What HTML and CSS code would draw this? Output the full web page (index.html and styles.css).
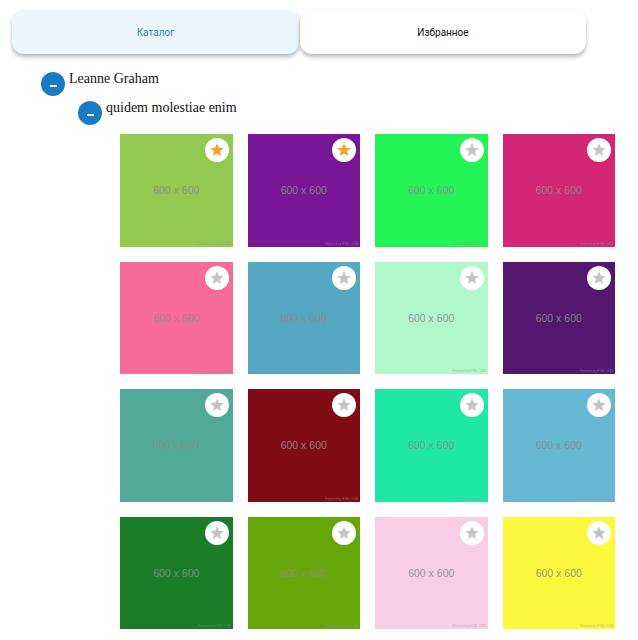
FILE: index.html
```html
<!DOCTYPE html>
<html lang="ru">
<head>
<meta charset="utf-8">
<title>Каталог</title>
<link rel="stylesheet" href="styles.css">
</head>
<body>
<div class="tabs">
  <div class="tab tab-active">Каталог</div>
  <div class="tab">Избранное</div>
</div>
<div class="node node-user">
  <div class="node-row">
    <span class="toggle"><span class="bar"></span></span>
    <span class="node-label">Leanne Graham</span>
  </div>
  <div class="node node-album">
    <div class="node-row">
      <span class="toggle"><span class="bar"></span></span>
      <span class="node-label">quidem molestiae enim</span>
    </div>
    <div class="grid">
      <div class="cell"><div class="photo" style="background:#92c952"><span class="ph">600 x 600</span><span class="pw">Powered by HTML.COM</span><span class="fav on"><svg viewBox="0 0 24 24"><path d="M12 17.27L18.18 21l-1.64-7.03L22 9.24l-7.19-.61L12 2 9.19 8.63 2 9.24l5.46 4.73L5.82 21z"/></svg></span></div></div>
      <div class="cell"><div class="photo" style="background:#771796"><span class="ph">600 x 600</span><span class="pw">Powered by HTML.COM</span><span class="fav on"><svg viewBox="0 0 24 24"><path d="M12 17.27L18.18 21l-1.64-7.03L22 9.24l-7.19-.61L12 2 9.19 8.63 2 9.24l5.46 4.73L5.82 21z"/></svg></span></div></div>
      <div class="cell"><div class="photo" style="background:#24f355"><span class="ph">600 x 600</span><span class="pw">Powered by HTML.COM</span><span class="fav"><svg viewBox="0 0 24 24"><path d="M12 17.27L18.18 21l-1.64-7.03L22 9.24l-7.19-.61L12 2 9.19 8.63 2 9.24l5.46 4.73L5.82 21z"/></svg></span></div></div>
      <div class="cell"><div class="photo" style="background:#d32776"><span class="ph">600 x 600</span><span class="pw">Powered by HTML.COM</span><span class="fav"><svg viewBox="0 0 24 24"><path d="M12 17.27L18.18 21l-1.64-7.03L22 9.24l-7.19-.61L12 2 9.19 8.63 2 9.24l5.46 4.73L5.82 21z"/></svg></span></div></div>
      <div class="cell"><div class="photo" style="background:#f66b97"><span class="ph">600 x 600</span><span class="pw">Powered by HTML.COM</span><span class="fav"><svg viewBox="0 0 24 24"><path d="M12 17.27L18.18 21l-1.64-7.03L22 9.24l-7.19-.61L12 2 9.19 8.63 2 9.24l5.46 4.73L5.82 21z"/></svg></span></div></div>
      <div class="cell"><div class="photo" style="background:#56a8c2"><span class="ph">600 x 600</span><span class="pw">Powered by HTML.COM</span><span class="fav"><svg viewBox="0 0 24 24"><path d="M12 17.27L18.18 21l-1.64-7.03L22 9.24l-7.19-.61L12 2 9.19 8.63 2 9.24l5.46 4.73L5.82 21z"/></svg></span></div></div>
      <div class="cell"><div class="photo" style="background:#b0f7cc"><span class="ph">600 x 600</span><span class="pw">Powered by HTML.COM</span><span class="fav"><svg viewBox="0 0 24 24"><path d="M12 17.27L18.18 21l-1.64-7.03L22 9.24l-7.19-.61L12 2 9.19 8.63 2 9.24l5.46 4.73L5.82 21z"/></svg></span></div></div>
      <div class="cell"><div class="photo" style="background:#54176f"><span class="ph">600 x 600</span><span class="pw">Powered by HTML.COM</span><span class="fav"><svg viewBox="0 0 24 24"><path d="M12 17.27L18.18 21l-1.64-7.03L22 9.24l-7.19-.61L12 2 9.19 8.63 2 9.24l5.46 4.73L5.82 21z"/></svg></span></div></div>
      <div class="cell"><div class="photo" style="background:#51aa97"><span class="ph">600 x 600</span><span class="pw">Powered by HTML.COM</span><span class="fav"><svg viewBox="0 0 24 24"><path d="M12 17.27L18.18 21l-1.64-7.03L22 9.24l-7.19-.61L12 2 9.19 8.63 2 9.24l5.46 4.73L5.82 21z"/></svg></span></div></div>
      <div class="cell"><div class="photo" style="background:#810b14"><span class="ph">600 x 600</span><span class="pw">Powered by HTML.COM</span><span class="fav"><svg viewBox="0 0 24 24"><path d="M12 17.27L18.18 21l-1.64-7.03L22 9.24l-7.19-.61L12 2 9.19 8.63 2 9.24l5.46 4.73L5.82 21z"/></svg></span></div></div>
      <div class="cell"><div class="photo" style="background:#1ee8a4"><span class="ph">600 x 600</span><span class="pw">Powered by HTML.COM</span><span class="fav"><svg viewBox="0 0 24 24"><path d="M12 17.27L18.18 21l-1.64-7.03L22 9.24l-7.19-.61L12 2 9.19 8.63 2 9.24l5.46 4.73L5.82 21z"/></svg></span></div></div>
      <div class="cell"><div class="photo" style="background:#66b7d2"><span class="ph">600 x 600</span><span class="pw">Powered by HTML.COM</span><span class="fav"><svg viewBox="0 0 24 24"><path d="M12 17.27L18.18 21l-1.64-7.03L22 9.24l-7.19-.61L12 2 9.19 8.63 2 9.24l5.46 4.73L5.82 21z"/></svg></span></div></div>
      <div class="cell"><div class="photo" style="background:#197d29"><span class="ph">600 x 600</span><span class="pw">Powered by HTML.COM</span><span class="fav"><svg viewBox="0 0 24 24"><path d="M12 17.27L18.18 21l-1.64-7.03L22 9.24l-7.19-.61L12 2 9.19 8.63 2 9.24l5.46 4.73L5.82 21z"/></svg></span></div></div>
      <div class="cell"><div class="photo" style="background:#65a70a"><span class="ph">600 x 600</span><span class="pw">Powered by HTML.COM</span><span class="fav"><svg viewBox="0 0 24 24"><path d="M12 17.27L18.18 21l-1.64-7.03L22 9.24l-7.19-.61L12 2 9.19 8.63 2 9.24l5.46 4.73L5.82 21z"/></svg></span></div></div>
      <div class="cell"><div class="photo" style="background:#f9cee5"><span class="ph">600 x 600</span><span class="pw">Powered by HTML.COM</span><span class="fav"><svg viewBox="0 0 24 24"><path d="M12 17.27L18.18 21l-1.64-7.03L22 9.24l-7.19-.61L12 2 9.19 8.63 2 9.24l5.46 4.73L5.82 21z"/></svg></span></div></div>
      <div class="cell"><div class="photo" style="background:#fdf73e"><span class="ph">600 x 600</span><span class="pw">Powered by HTML.COM</span><span class="fav"><svg viewBox="0 0 24 24"><path d="M12 17.27L18.18 21l-1.64-7.03L22 9.24l-7.19-.61L12 2 9.19 8.63 2 9.24l5.46 4.73L5.82 21z"/></svg></span></div></div>
    </div>
  </div>
</div>
</body>
</html>
```
FILE: styles.css
```css
html, body {
  background: #ffffff;
}
body {
  margin: 8px;
  font-family: "Liberation Serif", "Times New Roman", serif;
  font-size: 14px;
  color: #111111;
}
.tabs {
  display: flex;
  margin: 2px 0 0 4px;
}
.tab {
  width: 287px;
  height: 44px;
  border-radius: 12px;
  background: #ffffff;
  box-shadow: 0 3px 4px rgba(0, 0, 0, 0.28);
  display: flex;
  align-items: center;
  justify-content: center;
  font-family: Roboto, "Liberation Sans", sans-serif;
  font-size: 10px;
  color: #111111;
}
.tab + .tab {
  width: 286px;
  margin-left: 1px;
}
.tab-active {
  background: #ebf6fd;
  color: #2f86c9;
}
.node-user {
  margin-top: 15px;
  padding-left: 33px;
}
.node-album {
  margin-top: 2px;
  padding-left: 37px;
}
.node-row {
  display: flex;
  align-items: flex-start;
}
.toggle {
  width: 24px;
  height: 24px;
  margin-top: 3px;
  margin-right: 4px;
  border-radius: 50%;
  background: #1a7bc4;
  display: flex;
  justify-content: center;
  flex-shrink: 0;
}
.bar {
  width: 7px;
  height: 2px;
  margin-top: 13px;
  background: #ffffff;
}
.node-label {
  line-height: 18px;
  padding-top: 1px;
}
.grid {
  margin-top: 9px;
  margin-left: 42px;
  display: grid;
  grid-template-columns: repeat(4, 1fr);
}
.cell {
  padding: 0 15px 15px 0;
}
.photo {
  position: relative;
  aspect-ratio: 1 / 1;
  display: flex;
  align-items: center;
  justify-content: center;
}
.ph {
  font-family: "Liberation Sans", Arial, sans-serif;
  font-size: 10.5px;
  color: rgba(140, 140, 140, 0.9);
}
.pw {
  position: absolute;
  right: 2px;
  bottom: 1px;
  font-family: "Liberation Sans", Arial, sans-serif;
  font-size: 3px;
  color: rgba(150, 150, 150, 0.7);
}
.fav {
  position: absolute;
  top: 4px;
  right: 4px;
  width: 24px;
  height: 24px;
  border-radius: 50%;
  background: #ffffff;
  display: flex;
  align-items: center;
  justify-content: center;
}
.fav svg {
  width: 16px;
  height: 16px;
  fill: #c4c4c4;
}
.fav.on svg {
  fill: #f9a128;
}
```
